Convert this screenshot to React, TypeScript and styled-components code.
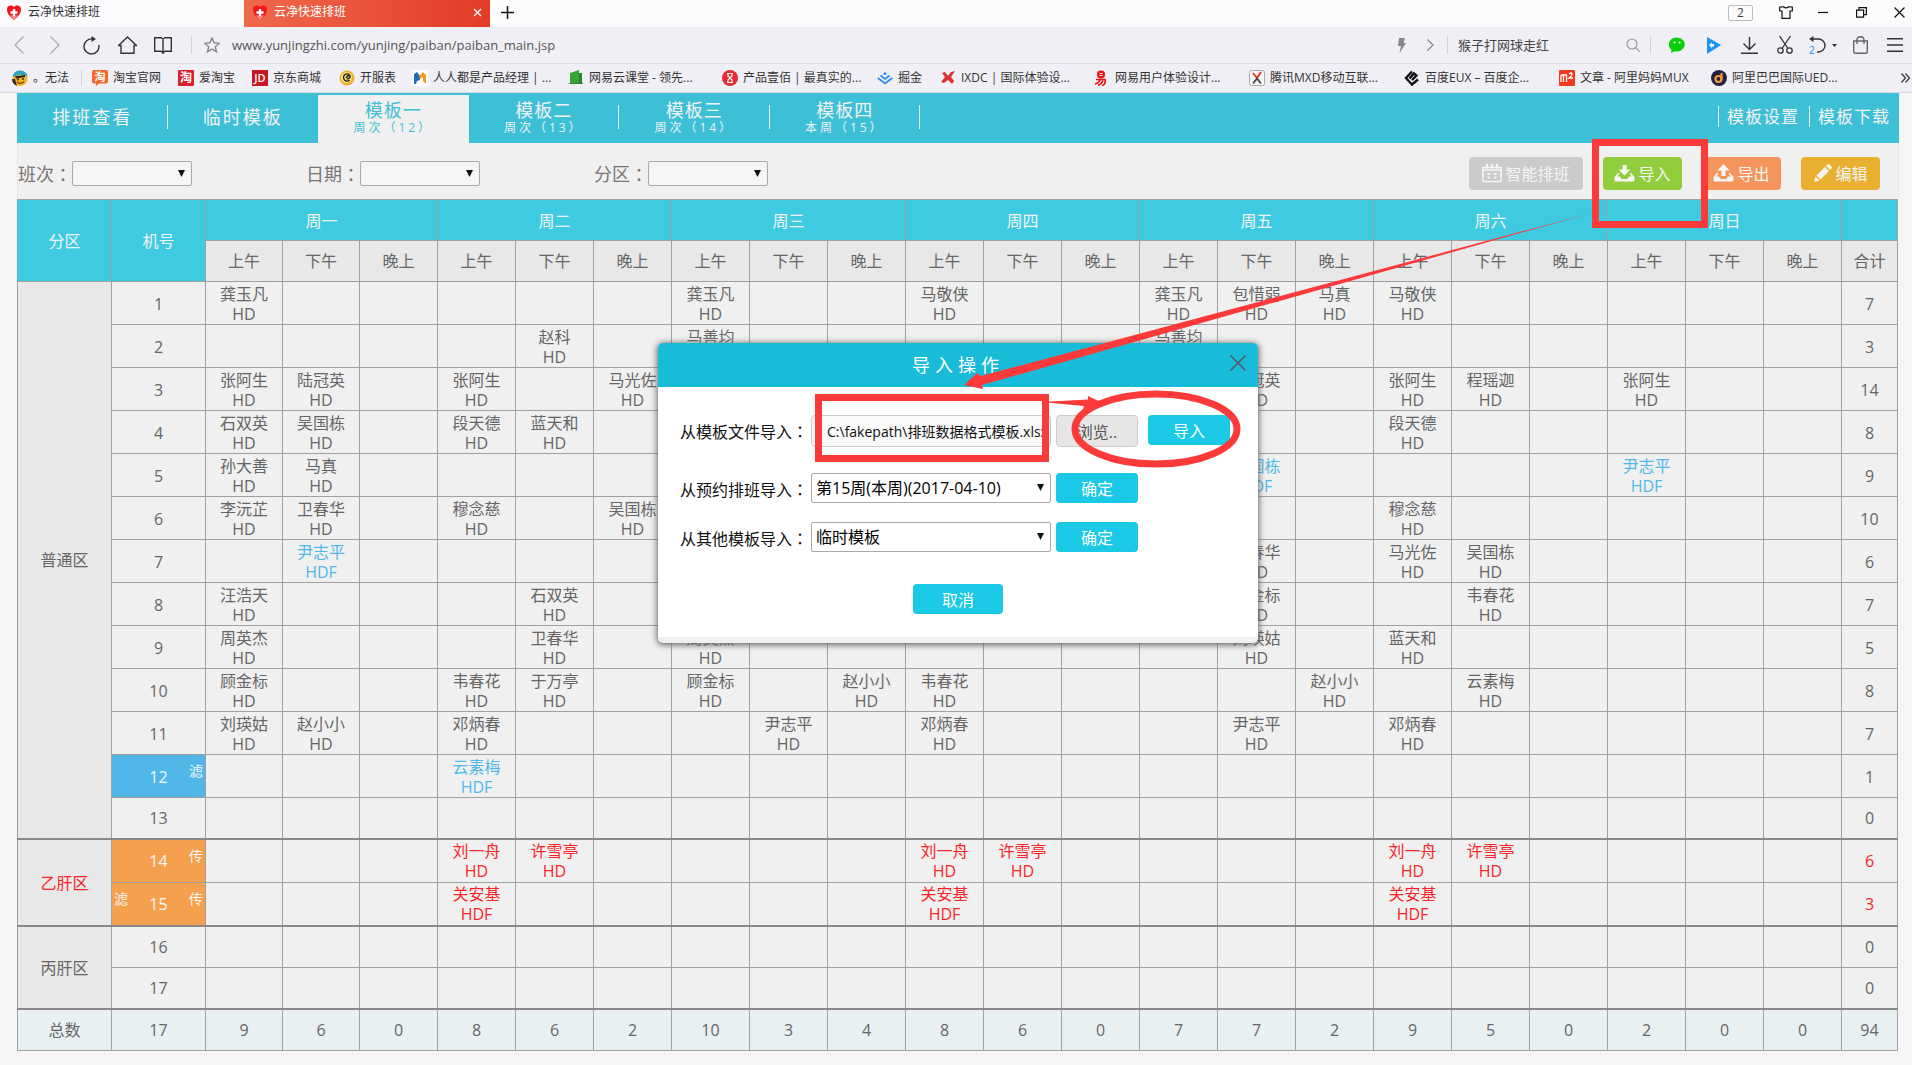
import React from "react";
import styled, { createGlobalStyle, css } from "styled-components";

const GlobalStyle = createGlobalStyle`
  * { box-sizing: border-box; }
  body {
    margin: 0;
    background: #f5f5f5;
    color: #666;
    font-family: "Open Sans", "Noto Sans CJK SC", sans-serif;
    font-size: 16px;
  }
  button, input, select { font: inherit; }
  button { cursor: pointer; }
  a { color: inherit; text-decoration: none; }
`;

const Page = styled.div`
  position: relative;
  min-height: 100vh;
  overflow: hidden;
`;

/* ---------- browser chrome ---------- */

const TabStrip = styled.div`
  display: flex;
  align-items: stretch;
  height: 27px;
  background: #fbfbfd;
`;

const BrowserTab = styled.a<{ $active?: boolean }>`
  display: flex;
  align-items: center;
  gap: 7px;
  width: ${(p) => (p.$active ? 246 : 244)}px;
  padding: ${(p) => (p.$active ? "0 8px 3px 9px" : "0 8px 3px 7px")};
  font-size: 12px;
  line-height: 16px;
  color: ${(p) => (p.$active ? "#fff" : "#333")};
  background: ${(p) => (p.$active ? "linear-gradient(90deg, #f0694c, #e23b28)" : "transparent")};
`;

const IconButton = styled.button<{ $w?: number }>`
  display: flex;
  align-items: center;
  justify-content: center;
  flex: none;
  width: ${(p) => p.$w ?? 36}px;
  height: 100%;
  padding: 0;
  border: 0;
  background: transparent;
  color: #333;
`;

const Spacer = styled.div`
  flex: 1;
`;

const CountBadge = styled.button`
  align-self: center;
  width: 25px;
  height: 16px;
  margin: 0 8px 2px 0;
  padding: 0;
  border: 1px solid #bbb;
  border-radius: 2px;
  background: transparent;
  color: #444;
  font-size: 12px;
  line-height: 14px;
`;

const WindowButtons = styled.div`
  display: flex;
  padding-bottom: 3px;
`;

const AddressBar = styled.div`
  display: flex;
  align-items: center;
  height: 37px;
  background: #f0eff5;
  border-bottom: 1px solid #dcdbe1;
`;

const NavButtons = styled.div`
  display: flex;
  height: 100%;
  padding-left: 1px;
`;

const Divider = styled.span`
  flex: none;
  width: 1px;
  height: 18px;
  background: #d3d2d9;
`;

const Url = styled.input`
  flex: 1;
  min-width: 0;
  height: 28px;
  padding: 0;
  border: 0;
  background: transparent;
  color: #555;
  font-size: 13px;
  line-height: 28px;
`;

const SearchBox = styled.input`
  width: 168px;
  height: 28px;
  padding: 0 0 0 10px;
  border: 0;
  background: transparent;
  color: #444;
  font-size: 13px;
  line-height: 28px;
`;

const Bookmarks = styled.nav`
  display: flex;
  align-items: center;
  height: 29px;
  padding-left: 12px;
  background: #f0eff5;
  border-bottom: 1px solid #d9d8de;
`;

const Bookmark = styled.a<{ $w: number }>`
  display: flex;
  align-items: center;
  gap: 5px;
  flex: none;
  width: ${(p) => p.$w}px;
  font-size: 12px;
  line-height: 16px;
  color: #333;
  white-space: nowrap;
`;

const BookmarkDivider = styled(Divider)`
  margin-right: 10px;
  height: 16px;
`;

const More = styled(IconButton)`
  width: 14px;
`;

/* ---------- application ---------- */

const Main = styled.main`
  position: relative;
  margin: 0 13px 0 17px;
`;

const TopNav = styled.nav`
  display: flex;
  justify-content: space-between;
  height: 50px;
  background: #3dbfd6;
  color: #f3f3f3;
`;

const NavTabs = styled.div`
  display: grid;
  grid-template-columns: repeat(6, 1fr);
  width: 903px;
  padding-top: 2px;
`;

const NavTab = styled.a<{ $active?: boolean; $line?: boolean; $wide?: boolean }>`
  position: relative;
  display: flex;
  flex-direction: column;
  align-items: center;
  justify-content: center;
  padding-bottom: 3px;
  font-size: 18px;
  line-height: 21px;
  letter-spacing: ${(p) => (p.$wide ? 2 : 1)}px;
  ${(p) => p.$active && css`
    background: #f0f0f0;
    color: #3dbfd6;
  `}
  ${(p) => p.$line && css`
    &::after {
      content: "";
      position: absolute;
      right: 0;
      top: 10px;
      width: 1px;
      height: 24px;
      background: #f3f3f3;
    }
  `}
`;

const Week = styled.small`
  font-size: 12px;
  line-height: 14px;
  letter-spacing: 3px;
`;

const NavLinks = styled.div`
  display: flex;
  align-items: center;
  gap: 10px;
  padding: 0 9px 4px 0;
`;

const NavLink = styled.a`
  padding-left: 8px;
  border-left: 1px solid #f3f3f3;
  font-size: 17px;
  line-height: 21px;
  letter-spacing: 1px;
`;

const FilterBar = styled.div`
  display: flex;
  align-items: center;
  height: 56px;
  padding: 5px 18px 0 0;
  background: #f0f0f0;
  border: solid #e8e8e8;
  border-width: 0 1px;
`;

const Filter = styled.label`
  display: flex;
  align-items: center;
  width: 288px;
  font-size: 18px;
  line-height: 24px;
  color: #777;
`;

/* The Traditional Chinese face centres the full-width colon in its cell. */
const Colon = styled.span`
  font-family: "Noto Sans CJK TC", sans-serif;
  line-height: 1;
`;

const SelectWrap = styled.span<{ $w: number }>`
  position: relative;
  display: block;
  width: ${(p) => p.$w}px;
`;

const Arrow = styled.svg`
  position: absolute;
  right: 7px;
  top: 50%;
  margin-top: -4px;
  pointer-events: none;
`;

const NativeSelect = styled.select<{ $h: number; $bg: string }>`
  display: block;
  appearance: none;
  width: 100%;
  height: ${(p) => p.$h}px;
  padding: 0 20px 0 4px;
  border: 1px solid #a9a9a9;
  border-radius: 2px;
  background: ${(p) => p.$bg};
  color: #000;
  font-size: 16px;
`;

const Actions = styled.div`
  display: flex;
  gap: 20px;
  margin-left: auto;
`;

const Action = styled.button<{ $color: string; $w: number }>`
  display: flex;
  align-items: center;
  justify-content: center;
  gap: 3px;
  width: ${(p) => p.$w}px;
  height: 33px;
  padding: 0;
  border: 0;
  border-radius: 4px;
  background: ${(p) => p.$color};
  color: #f5f5f5;
  line-height: 20px;
  white-space: nowrap;
`;

const Schedule = styled.table`
  width: calc(100% - 1px);
  table-layout: fixed;
  border-collapse: collapse;
  background: #f0f0f0;
  border-bottom: 1px solid #555;
  text-align: center;
  line-height: 20px;
`;

const Col = styled.col<{ $w?: number }>`
  width: ${(p) => (p.$w ? p.$w + "px" : "auto")};
`;

const Row = styled.tr<{ $h: number; $thick?: boolean }>`
  height: ${(p) => p.$h}px;
  border-top: ${(p) => (p.$thick ? "2px solid #888" : "0")};
`;

const Cell = styled.td<{ $tone?: "blue" | "red" }>`
  padding: 1px 0 0;
  border: 1px solid #a0a0a0;
  ${(p) => p.$tone && css`color: ${p.$tone === "red" ? "#f8252a" : "#50b8e8"};`}
  ${Row}[data-thick] & {
    border-top: 2px solid #888;
  }
`;

const DayHead = styled.th`
  padding: 1px 0 0;
  border: 1px solid #a0a0a0;
  border-left-color: #5fb6c4;
  background: #3ecbe2;
  color: #f3f3f3;
  font-weight: 400;
`;

const SlotHead = styled.th`
  padding: 0;
  border: 1px solid #a0a0a0;
  background: #e8e8e8;
  font-weight: 400;
`;

const ZoneCell = styled(Cell)`
  background: #e8e8e8;
`;

const MachineCell = styled(Cell)<{ $fill?: string }>`
  position: relative;
  ${(p) => p.$fill && css`
    background: ${p.$fill};
    color: #f5f5f5;
  `}
`;

const Flag = styled.span<{ $side: "left" | "right" }>`
  position: absolute;
  top: 8px;
  ${(p) => p.$side}: 2px;
  font-size: 14px;
  line-height: 16px;
`;

const TotalRow = styled(Row)`
  background: #e8f0f2;
`;

/* ---------- dialog ---------- */

const Dialog = styled.section`
  position: absolute;
  top: 250px;
  left: 50%;
  width: 600px;
  margin-left: -300px;
  border-radius: 5px;
  border-bottom: 6px solid #f0f0f0;
  background: #fff;
  box-shadow: 0 1px 6px 1px #666;
  color: #111;
`;

const DialogHead = styled.header`
  display: flex;
  align-items: center;
  justify-content: center;
  position: relative;
  height: 44px;
  border-radius: 5px 5px 0 0;
  background: #19bcd8;
  color: #fff;
`;

const DialogTitle = styled.h2`
  margin: 0;
  font-size: 18px;
  font-weight: 400;
  line-height: 24px;
  letter-spacing: 5px;
`;

const CloseButton = styled.button`
  position: absolute;
  right: 12px;
  top: 12px;
  display: flex;
  padding: 0;
  border: 0;
  background: transparent;
`;

const DialogBody = styled.form`
  display: grid;
  grid-template-columns: 126px 240px 82px 82px;
  column-gap: 5px;
  align-items: start;
  padding: 28px 25px 23px 22px;
`;

const FieldLabel = styled.label`
  grid-column: 1;
  height: 34px;
  line-height: 34px;
  white-space: nowrap;
`;

const FileName = styled.input`
  width: 240px;
  height: 32px;
  padding: 0 0 0 15px;
  border: 1px solid #ccc;
  border-radius: 4px;
  background: #f9f9f9;
  color: #111;
  font-size: 14px;
`;

const BrowseButton = styled.button`
  height: 32px;
  padding: 0;
  border: 1px solid #ccc;
  border-radius: 4px;
  background: #e6e6e6;
  color: #555;
`;

const PrimaryButton = styled.button<{ $push?: boolean }>`
  height: 30px;
  margin-left: ${(p) => (p.$push ? 5 : 0)}px;
  padding: 0;
  border: 0;
  border-radius: 4px;
  background: #19c9e6;
  color: #fff;
  width: 82px;
`;

const RowGap = styled.div<{ $h: number }>`
  grid-column: 1 / -1;
  height: ${(p) => p.$h}px;
`;

const CancelButton = styled(PrimaryButton)`
  grid-column: 1 / -1;
  width: 90px;
  margin-left: 233px;
`;

const Markup = styled.svg`
  position: absolute;
  left: 0;
  top: 0;
  pointer-events: none;
`;

/* ---------- icons ---------- */

type SvgProps = { w: number; h?: number; children: React.ReactNode; sw?: number; color?: string };
const Line = ({ w, h = w, children, sw = 1.2, color = "currentColor" }: SvgProps) => (
  <svg width={w} height={h} viewBox={`0 0 ${w} ${h}`} fill="none" stroke={color} strokeWidth={sw} aria-hidden="true">
    {children}
  </svg>
);
const Solid = ({ w, h = w, children, color = "currentColor" }: SvgProps) => (
  <svg width={w} height={h} viewBox={`0 0 ${w} ${h}`} fill={color} aria-hidden="true">
    {children}
  </svg>
);

const Heart = () => (
  <Solid w={14} h={15}>
    <path d="M7 15C2 11 0 8 0 4.500 0 1.500 1.800.5 3.500.5 5.200.5 6.400 1.200 7 2 7.600 1.200 8.800.5 10.500.5 12.200.5 14 1.500 14 4.500 14 8 12 11 7 15z" fill="#f2161c" />
    <path d="M3 10.500h8L7 15z" fill="#ff8b8b" />
    <path d="M5.800 4h2.400v2.300h2.300v2.400H8.200V11H5.800V8.700H3.500V6.300h2.300z" fill="#fff" />
  </Solid>
);

const glyphProps = { textAnchor: "middle" as const, fill: "#fff", fontWeight: 700 };

const marks: Record<string, React.ReactNode> = {
  face: (
    <>
      <circle cx="8" cy="8.500" r="7.500" fill="#f3b51f" />
      <path d="M1 7C1 2 5 .5 8.500.5S15 3 15.500 6L8 4.500z" fill="#2aa5c4" />
      <path d="M3 6.500l10-1.500v2L4 8.500z" fill="#222" />
      <circle cx="6" cy="9.500" r="1" fill="#222" />
      <circle cx="11" cy="9" r="1" fill="#222" />
      <path d="M5 12q4 3 7-.5" stroke="#8c2f10" fill="none" strokeWidth="1.200" />
      <path d="M0 9q0 5 5 7l-2-7z" fill="#3a2b1a" />
    </>
  ),
  tao: (
    <>
      <path d="M2 0h12q2 0 2 2v9.500q0 2-2 2H7L4 16v-2.500H2q-2 0-2-2V2q0-2 2-2z" fill="#f4662a" />
      <text x="8" y="11" fontSize="11" {...glyphProps}>淘</text>
    </>
  ),
  aitao: (
    <>
      <rect width="16" height="16" rx="1" fill="#dc1f2b" />
      <text x="8" y="12" fontSize="12" {...glyphProps}>淘</text>
    </>
  ),
  jd: (
    <>
      <rect width="16" height="16" fill="#c91623" />
      <text x="8" y="12" fontSize="11" {...glyphProps} fontWeight={600}>JD</text>
    </>
  ),
  coin: (
    <>
      <circle cx="8" cy="8" r="7.500" fill="#e8b12a" />
      <circle cx="7.500" cy="7.500" r="5.500" fill="#fbe27a" />
      <path d="M10.500 5A3.500 3.500 0 1 0 10.500 10M7 8q3-4 4-2t-3 3" stroke="#222" strokeWidth="1.500" fill="none" />
    </>
  ),
  pm: (
    <>
      <rect width="16" height="16" fill="#fff" />
      <path d="M2 14V4l3-2 3 4v4l-3 1-1 3z" fill="#1f6dc0" />
      <path d="M7 6l4-4 3 3v9l-3-3V7L8 9z" fill="#f49a1c" />
    </>
  ),
  cloudClass: (
    <>
      <path d="M2 3l9-3v13H2z" fill="#36a536" />
      <path d="M11 3h3v9l1 2H2l-2-1h11z" fill="#218a2b" />
    </>
  ),
  hourglass: (
    <>
      <circle cx="8" cy="8" r="8" fill="#e72b35" />
      <path d="M5 3.500h6M5 12.500h6M6 4v2l4 4v2.500M10 4v2l-4 4v2.500" stroke="#fff" strokeWidth="1.200" fill="none" />
    </>
  ),
  juejin: (
    <>
      <path d="M8 2l2 1.700L8 5.300 6 3.700z" fill="#2b8cf0" />
      <path d="M3.500 5.500L8 9l4.500-3.500M.8 8L8 13.500 15.200 8" stroke="#2b8cf0" strokeWidth="1.700" fill="none" />
    </>
  ),
  ixdc: <path d="M2 3l3-1 3 4 3-4 4-1-4 6 3 4-2 3-4-4-4 3-3-1 4-5z" fill="#d8322c" />,
  yi: (
    <>
      <circle cx="7" cy="4.500" r="4" fill="#f01010" />
      <path d="M5.500 3.500h3M5.500 5.500h3" stroke="#fff" strokeWidth="1" />
      <path d="M2 9.500h9q1 5-3 6M1 14q4-1 5-4M4 15.500q4-2 5-5" stroke="#f01010" strokeWidth="1.600" fill="none" />
    </>
  ),
  mxd: (
    <>
      <rect x=".5" y=".5" width="15" height="15" rx="2" fill="#f6f6f6" stroke="#aaa" />
      <path d="M4 3l4 5 4-6" stroke="#e23424" strokeWidth="1.800" fill="none" />
      <path d="M4 13.500l4-5 4 5" stroke="#444" strokeWidth="1.800" fill="none" />
    </>
  ),
  eux: <path d="M8 1.500L2 8l6 6.500 6-5M5.500 8.500L10 3.500l2.500 2L8 10" stroke="#111" strokeWidth="2.400" fill="none" />,
  mux: (
    <>
      <rect width="16" height="16" rx="1" fill="#f03a1e" />
      <path d="M2 12V5.500q2.500-1.500 2.500 0V12M4.500 5.500q3-1.500 3 0V12M10 4q3-2 3 0T10 8h4" stroke="#fff" strokeWidth="1.300" fill="none" />
    </>
  ),
  ued: (
    <>
      <circle cx="8" cy="8" r="8" fill="#23204a" />
      <circle cx="7.500" cy="9" r="3" stroke="#f49a2a" strokeWidth="2.200" fill="none" />
      <path d="M10.500 3v7" stroke="#f49a2a" strokeWidth="2.200" />
    </>
  ),
};

const bookmarks: [string, string, number][] = [
  ["tao", "淘宝官网", 86],
  ["aitao", "爱淘宝", 74],
  ["jd", "京东商城", 87],
  ["coin", "开服表", 73],
  ["pm", "人人都是产品经理 | ...", 156],
  ["cloudClass", "网易云课堂 - 领先...", 154],
  ["hourglass", "产品壹佰 | 最真实的...", 155],
  ["juejin", "掘金", 63],
  ["ixdc", "IXDC | 国际体验设...", 154],
  ["yi", "网易用户体验设计...", 155],
  ["mxd", "腾讯MXD移动互联...", 155],
  ["eux", "百度EUX – 百度企...", 155],
  ["mux", "文章 - 阿里妈妈MUX", 152],
  ["ued", "阿里巴巴国际UED...", 150],
];

const CalendarIcon = () => (
  <Line w={20} h={20} sw={1.600}>
    <path d="M1 3.500h18v14H1zM1 6h18" />
    <path d="M5 0v4.500M10 0v4.500M15 0v4.500" strokeWidth="2" />
    <path d="M5.500 10h2.500M12 10h2.500M5.500 13.500h2.500M12 13.500h2.500" strokeWidth="2" />
  </Line>
);
const TrayIcon = ({ up }: { up?: boolean }) => (
  <Solid w={21} h={20}>
    <path d={up ? "M10.500 0l6 6.500h-4V12h-4V6.500h-4z" : "M8.500 1h4v4.500h4l-6 6-6-6h4z"} />
    <path d="M4 9L.5 13v3q0 1.500 1.500 1.500h17q1.500 0 1.500-1.500v-3L17 9h-1.500l2 3.500H15L13.500 15h-6L6 12.500H3.500l2-3.500z" />
  </Solid>
);
const PencilIcon = () => (
  <Solid w={19} h={20}>
    <path d="M1 18l1.500-5.500 4 4zM3.500 11.500L12 3l4 4-8.500 8.500zM13 2l1.500-1.500q1-.8 2 0l2 2q.8 1 0 2L17 6z" />
  </Solid>
);

/* ---------- data ---------- */

type Visit = [slot: number, name: string, tone?: "blue" | "red"];
type Machine = {
  no: number;
  total: number;
  fill?: string;
  left?: string;
  right?: string;
  visits: Visit[];
};
type Zone = { name: string; red?: boolean; machines: Machine[] };

const zones: Zone[] = [
  {
    name: "普通区",
    machines: [
      { no: 1, total: 7, visits: [[0, "龚玉凡"], [6, "龚玉凡"], [9, "马敬侠"], [12, "龚玉凡"], [13, "包惜弱"], [14, "马真"], [15, "马敬侠"]] },
      { no: 2, total: 3, visits: [[4, "赵科"], [6, "马善均"], [12, "马善均"]] },
      { no: 3, total: 14, visits: [[0, "张阿生"], [1, "陆冠英"], [3, "张阿生"], [5, "马光佐"], [13, "陆冠英"], [15, "张阿生"], [16, "程瑶迦"], [18, "张阿生"]] },
      { no: 4, total: 8, visits: [[0, "石双英"], [1, "吴国栋"], [3, "段天德"], [4, "蓝天和"], [15, "段天德"]] },
      { no: 5, total: 9, visits: [[0, "孙大善"], [1, "马真"], [13, "吴国栋", "blue"], [18, "尹志平", "blue"]] },
      { no: 6, total: 10, visits: [[0, "李沅芷"], [1, "卫春华"], [3, "穆念慈"], [5, "吴国栋"], [15, "穆念慈"]] },
      { no: 7, total: 6, visits: [[1, "尹志平", "blue"], [13, "卫春华"], [15, "马光佐"], [16, "吴国栋"]] },
      { no: 8, total: 7, visits: [[0, "汪浩天"], [4, "石双英"], [13, "顾金标"], [16, "韦春花"]] },
      { no: 9, total: 5, visits: [[0, "周英杰"], [4, "卫春华"], [6, "周英杰"], [13, "刘瑛姑"], [15, "蓝天和"]] },
      { no: 10, total: 8, visits: [[0, "顾金标"], [3, "韦春花"], [4, "于万亭"], [6, "顾金标"], [8, "赵小小"], [9, "韦春花"], [14, "赵小小"], [16, "云素梅"]] },
      { no: 11, total: 7, visits: [[0, "刘瑛姑"], [1, "赵小小"], [3, "邓炳春"], [7, "尹志平"], [9, "邓炳春"], [13, "尹志平"], [15, "邓炳春"]] },
      { no: 12, total: 1, fill: "#50b8e8", right: "滤", visits: [[3, "云素梅", "blue"]] },
      { no: 13, total: 0, visits: [] },
    ],
  },
  {
    name: "乙肝区",
    red: true,
    machines: [
      { no: 14, total: 6, fill: "#f5a04d", right: "传", visits: [[3, "刘一舟", "red"], [4, "许雪亭", "red"], [9, "刘一舟", "red"], [10, "许雪亭", "red"], [15, "刘一舟", "red"], [16, "许雪亭", "red"]] },
      { no: 15, total: 3, fill: "#f5a04d", left: "滤", right: "传", visits: [[3, "关安基", "red"], [9, "关安基", "red"], [15, "关安基", "red"]] },
    ],
  },
  { name: "丙肝区", machines: [{ no: 16, total: 0, visits: [] }, { no: 17, total: 0, visits: [] }] },
];

const days = ["周一", "周二", "周三", "周四", "周五", "周六", "周日"];
const slots = ["上午", "下午", "晚上"];
const totals = [9, 6, 0, 8, 6, 2, 10, 3, 4, 8, 6, 0, 7, 7, 2, 9, 5, 0, 2, 0, 0, 94];
const slotIndexes = Array.from({ length: 21 }, (_, i) => i);

const therapy = ([, name, tone]: Visit) => (tone === "blue" || name === "关安基" ? "HDF" : "HD");

const Select = ({ id, w, h, bg, options }: { id: string; w: number; h: number; bg: string; options: string[] }) => (
  <SelectWrap $w={w}>
    <NativeSelect id={id} $h={h} $bg={bg}>
      {options.map((o) => (
        <option key={o}>{o}</option>
      ))}
    </NativeSelect>
    <Arrow width="7" height="7" viewBox="0 0 7 7" aria-hidden="true">
      <path d="M0 0h7L3.500 7z" fill="#111" />
    </Arrow>
  </SelectWrap>
);

const Chrome = () => (
  <header>
    <TabStrip>
      <BrowserTab href="#"><Heart />云净快速排班</BrowserTab>
      <BrowserTab href="#" $active>
        <Heart />云净快速排班
        <Spacer />
        <Line w={9} color="#fff"><path d="M1 1l7 7M8 1L1 8" /></Line>
      </BrowserTab>
      <WindowButtons>
        <IconButton aria-label="新标签页" $w={35}><Line w={13} sw={1.500} color="#111"><path d="M6.500 0v13M0 6.500h13" /></Line></IconButton>
      </WindowButtons>
      <Spacer />
      <CountBadge>2</CountBadge>
      <WindowButtons>
        <IconButton aria-label="皮肤" $w={49}>
          <Line w={14} h={13} color="#111"><path d="M4.500.8Q7 3 9.500.8L13.300 1v4H11v7.300H3V5H.7V1z" /></Line>
        </IconButton>
        <IconButton aria-label="最小化" $w={26}><Line w={10} color="#111"><path d="M0 5.500h10" /></Line></IconButton>
        <IconButton aria-label="还原" $w={50}>
          <Line w={11} color="#111"><path d="M.6 3.100h7v7h-7zM3 3V.6h7.400v7H8" /></Line>
        </IconButton>
        <IconButton aria-label="关闭" $w={26}><Line w={11} color="#111"><path d="M.5.5l10 10M10.500.5l-10 10" /></Line></IconButton>
      </WindowButtons>
    </TabStrip>

    <AddressBar>
      <NavButtons>
        <IconButton aria-label="后退"><Line w={10} h={18} color="#aaa"><path d="M9.500.5L1 9l8.500 8.500" /></Line></IconButton>
        <IconButton aria-label="前进"><Line w={10} h={18} color="#aaa"><path d="M.5.5L9 9 .5 17.500" /></Line></IconButton>
        <IconButton aria-label="刷新">
          <Line w={17} h={19} sw={1.400}>
            <path d="M9.500 3A7.500 7.500 0 1 0 15.800 9" />
            <path d="M8.500 0l4.500 3-4.500 3z" fill="#333" stroke="none" />
          </Line>
        </IconButton>
        <IconButton aria-label="主页"><Line w={19} h={18} sw={1.400}><path d="M.5 9.500L9.500 1l9 8.500H16V17.300H3V9.500z" /></Line></IconButton>
        <IconButton aria-label="收藏夹"><Line w={18} h={18} sw={1.400}><path d="M.7 1.700H7L9 3l2-1.300h6.300v13.600H11l-2 1.500-2-1.500H.7zM9 3v15" /></Line></IconButton>
      </NavButtons>
      <IconButton as="span" $w={10} />
      <Divider />
      <IconButton aria-label="收藏" $w={40}>
        <Line w={16} h={16} sw={1.400} color="#888"><path d="M8 1l2.100 4.800 5.200.5-4 3.400 1.200 5.100L8 12.100l-4.500 2.700 1.200-5.100-4-3.400 5.200-.5z" /></Line>
      </IconButton>
      <Url aria-label="地址" defaultValue="www.yunjingzhi.com/yunjing/paiban/paiban_main.jsp" />
      <IconButton aria-label="极速模式" $w={22}>
        <Solid w={8} h={15} color="#888"><path d="M1 0h6L5.500 5H8L1.500 15 3 8H0z" /></Solid>
      </IconButton>
      <IconButton aria-label="更多" $w={34}><Line w={7} h={12} color="#888"><path d="M.5.500L6 6 .5 11.500" /></Line></IconButton>
      <Divider />
      <SearchBox aria-label="搜索" defaultValue="猴子打网球走红" />
      <IconButton aria-label="搜索" $w={34}><Line w={14} color="#999"><circle cx="6" cy="6" r="5" /><path d="M9.700 9.700l4 4" /></Line></IconButton>
      <Divider />
      <IconButton as="span" $w={8} />
      <IconButton aria-label="微信">
        <Solid w={16} h={16} color="#09ce09">
          <path d="M8 .500a8 7 0 1 1-2.500 13.700L2 16l.5-3.300A8 7 0 0 1 8 .5z" />
          <circle cx="5.500" cy="5.500" r="1" fill="#fff" />
          <circle cx="10.500" cy="5.500" r="1" fill="#fff" />
        </Solid>
      </IconButton>
      <IconButton aria-label="播放">
        <Solid w={15} h={17} color="#1795f8"><path d="M1 0l14 8L1 17z" /><path d="M3 8l3-2.500V7h2v2.500H6V11z" fill="#fff" /></Solid>
      </IconButton>
      <IconButton aria-label="下载"><Line w={17} h={17} sw={1.400}><path d="M8.500 0v12M2.500 6.500l6 6 6-6M0 16.300h17" /></Line></IconButton>
      <IconButton aria-label="截图">
        <Line w={16} h={18} sw={1.300}><path d="M2.500 0l8.500 12.500M13.500 0L5 12.500" /><circle cx="3.500" cy="14.500" r="2.700" /><circle cx="12.500" cy="14.500" r="2.700" /></Line>
      </IconButton>
      <IconButton aria-label="撤销" $w={39}>
        <Line w={28} h={19} sw={1.400}>
          <path d="M3 3h6.500a6.500 6.500 0 0 1 0 13H8" />
          <path d="M0 3l4.500-3v6zM23 8h5l-2.500 3z" fill="#333" stroke="none" />
          <text x="0" y="18" fontSize="10" fill="#1b86f0" stroke="none">2</text>
        </Line>
      </IconButton>
      <IconButton aria-label="购物"><Line w={15} h={18} sw={1.400} color="#666"><path d="M.7 5h13.600v10.500q0 1.800-1.800 1.800h-10Q.7 17.300.7 15.500zM4 8V4q0-3.300 3.500-3.300T11 4v4" /></Line></IconButton>
      <IconButton aria-label="菜单" $w={34}><Line w={16} h={14} sw={1.400}><path d="M0 .7h16M0 7h16M0 13.300h16" /></Line></IconButton>
    </AddressBar>

    <Bookmarks>
      <Bookmark href="#" $w={69}><Solid w={16}>{marks.face}</Solid>。无法</Bookmark>
      <BookmarkDivider />
      {bookmarks.map(([icon, label, w]) => (
        <Bookmark key={icon} href="#" $w={w}>
          <Solid w={16}>{marks[icon]}</Solid>
          {label}
        </Bookmark>
      ))}
      <Spacer />
      <More aria-label="更多书签"><Line w={9} h={10}><path d="M.5.500L4.500 5l-4 4.500M4.500.5l4 4.500-4 4.500" /></Line></More>
    </Bookmarks>
  </header>
);

const ScheduleTable = () => (
  <Schedule>
    <colgroup>
      <Col $w={94} />
      <Col $w={94} />
      {slotIndexes.map((i) => <Col key={i} $w={i < 2 ? 77 : undefined} />)}
      <Col $w={56} />
    </colgroup>
    <thead>
      <Row $h={41}>
        <DayHead rowSpan={2}>分区</DayHead>
        <DayHead rowSpan={2}>机号</DayHead>
        {days.map((d) => <DayHead key={d} colSpan={3}>{d}</DayHead>)}
        <DayHead />
      </Row>
      <Row $h={41}>
        {days.map((d) => slots.map((s) => <SlotHead key={d + s}>{s}</SlotHead>))}
        <SlotHead>合计</SlotHead>
      </Row>
    </thead>
    <tbody>
      {zones.map((zone, z) =>
        zone.machines.map((m, i) => {
          const thick = z > 0 && i === 0;
          return (
            <Row key={m.no} $h={(m.visits.length ? 43 : 41) + (thick ? 1 : 0)} $thick={thick} data-thick={thick || undefined}>
              {i === 0 && <ZoneCell rowSpan={zone.machines.length} $tone={zone.red ? "red" : undefined}>{zone.name}</ZoneCell>}
              <MachineCell $fill={m.fill}>
                {m.left && <Flag $side="left">{m.left}</Flag>}
                {m.no}
                {m.right && <Flag $side="right">{m.right}</Flag>}
              </MachineCell>
              {slotIndexes.map((s) => {
                const v = m.visits.find((x) => x[0] === s);
                return <Cell key={s} $tone={v?.[2]}>{v && <>{v[1]}<br />{therapy(v)}</>}</Cell>;
              })}
              <Cell $tone={zone.red ? "red" : undefined}>{m.total}</Cell>
            </Row>
          );
        })
      )}
    </tbody>
    <tfoot>
      <TotalRow $h={42} $thick data-thick>
        <Cell>总数</Cell>
        <Cell>17</Cell>
        {totals.map((t, i) => <Cell key={i}>{t}</Cell>)}
      </TotalRow>
    </tfoot>
  </Schedule>
);

const ImportDialog = () => (
  <Dialog role="dialog" aria-labelledby="dialog-title">
    <DialogHead>
      <DialogTitle id="dialog-title">导入操作</DialogTitle>
      <CloseButton aria-label="关闭"><Line w={16} sw={1.500} color="#556"><path d="M.5.500l15 15M15.500.5l-15 15" /></Line></CloseButton>
    </DialogHead>
    <DialogBody onSubmit={(e) => e.preventDefault()}>
      <FieldLabel htmlFor="file">从模板文件导入<Colon>：</Colon></FieldLabel>
      <FileName id="file" readOnly defaultValue="C:\fakepath\排班数据格式模板.xlsx" />
      <BrowseButton type="button">浏览..</BrowseButton>
      <PrimaryButton type="button" $push>导入</PrimaryButton>
      <RowGap $h={24} />
      <FieldLabel htmlFor="booking">从预约排班导入<Colon>：</Colon></FieldLabel>
      <Select id="booking" w={240} h={30} bg="#fff" options={["第15周(本周)(2017-04-10)"]} />
      <PrimaryButton type="button">确定</PrimaryButton>
      <RowGap $h={15} />
      <FieldLabel htmlFor="template">从其他模板导入<Colon>：</Colon></FieldLabel>
      <Select id="template" w={240} h={30} bg="#fff" options={["临时模板"]} />
      <PrimaryButton type="button">确定</PrimaryButton>
      <RowGap $h={28} />
      <CancelButton type="button">取消</CancelButton>
    </DialogBody>
  </Dialog>
);

export default function App() {
  return (
    <Page>
      <GlobalStyle />
      <Chrome />
      <Main>
        <TopNav>
          <NavTabs>
            <NavTab href="#" $line $wide>排班查看</NavTab>
            <NavTab href="#" $wide>临时模板</NavTab>
            <NavTab href="#" $active>模板一<Week>周次（12）</Week></NavTab>
            <NavTab href="#" $line>模板二<Week>周次（13）</Week></NavTab>
            <NavTab href="#" $line>模板三<Week>周次（14）</Week></NavTab>
            <NavTab href="#" $line>模板四<Week>本周（15）</Week></NavTab>
          </NavTabs>
          <NavLinks>
            <NavLink href="#">模板设置</NavLink>
            <NavLink href="#">模板下载</NavLink>
          </NavLinks>
        </TopNav>
        <FilterBar>
          <Filter>班次<Colon>：</Colon><Select id="shift" w={120} h={25} bg="#f5f5f5" options={[""]} /></Filter>
          <Filter>日期<Colon>：</Colon><Select id="date" w={120} h={25} bg="#f5f5f5" options={[""]} /></Filter>
          <Filter>分区<Colon>：</Colon><Select id="zone" w={120} h={25} bg="#f5f5f5" options={[""]} /></Filter>
          <Actions>
            <Action $color="#cbcbcb" $w={114}><CalendarIcon />智能排班</Action>
            <Action $color="#92cd3d" $w={79}><TrayIcon />导入</Action>
            <Action $color="#f5955c" $w={79}><TrayIcon up />导出</Action>
            <Action $color="#e8b02e" $w={79}><PencilIcon />编辑</Action>
          </Actions>
        </FilterBar>
        <ScheduleTable />
        <ImportDialog />
      </Main>
      <Markup width="1912" height="1065" viewBox="0 0 1912 1065" fill="none" stroke="#fc3a39" strokeWidth="7" aria-hidden="true">
        <rect x="1595.500" y="142.500" width="109" height="82" />
        <rect x="818.500" y="397.500" width="227" height="61" />
        <ellipse cx="1156" cy="429" rx="81" ry="35" />
        <g fill="#fc3a39" stroke="none">
          <path d="M1591 213L981 376 977 373 964 385 983 389 982 385z" />
          <path d="M1041 402L1088 399.500V396L1101 402 1083 409 1084 406z" />
        </g>
      </Markup>
    </Page>
  );
}
